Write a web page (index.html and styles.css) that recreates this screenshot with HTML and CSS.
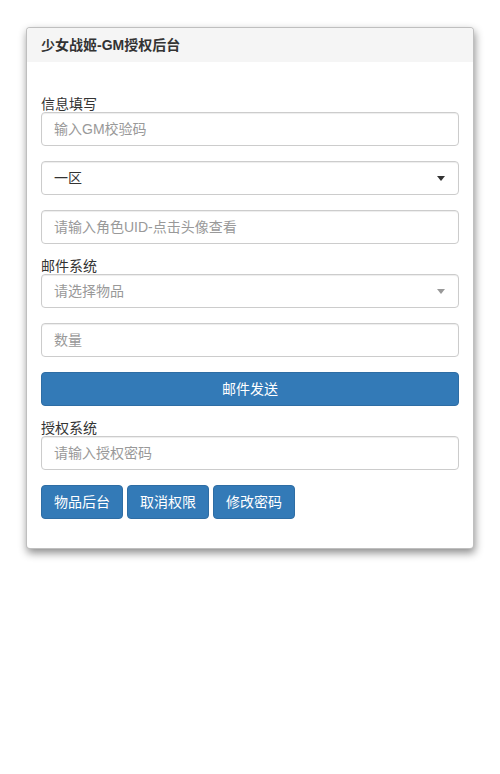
FILE: index.html
```html
<!DOCTYPE html>
<html lang="zh-CN">
<head>
<meta charset="utf-8">
<title>少女战姬-GM授权后台</title>
<link rel="stylesheet" href="styles.css">
</head>
<body>
<div class="panel">
  <div class="panel-heading">少女战姬-GM授权后台</div>
  <div class="panel-body">
    <label class="lbl">信息填写</label>
    <input class="form-control" type="text" placeholder="输入GM校验码">
    <div class="form-control select"><span>一区</span><span class="caret"></span></div>
    <input class="form-control" type="text" placeholder="请输入角色UID-点击头像查看">
    <label class="lbl">邮件系统</label>
    <div class="form-control select placeholder"><span>请选择物品</span><span class="caret light"></span></div>
    <input class="form-control" type="text" placeholder="数量">
    <button class="btn btn-block">邮件发送</button>
    <label class="lbl">授权系统</label>
    <input class="form-control" type="password" placeholder="请输入授权密码">
    <div class="btn-row">
      <button class="btn">物品后台</button>
      <button class="btn">取消权限</button>
      <button class="btn">修改密码</button>
    </div>
  </div>
</div>
</body>
</html>
```
FILE: styles.css
```css
* { box-sizing: border-box; }
html, body { margin: 0; padding: 0; background: #fff; }
body {
  padding: 27px 26px;
  font-family: "Liberation Sans", "Noto Sans CJK SC", sans-serif;
  font-size: 14px;
  color: #333;
}
.panel {
  width: 448px;
  border: 1px solid rgba(0,0,0,0.25);
  border-radius: 4px;
  background: #fff;
  box-shadow: 1px 4px 8px rgba(0,0,0,0.45);
  overflow: hidden;
}
.panel-heading {
  height: 34px;
  background: #f5f5f5;
  padding: 0 14px;
  font-weight: bold;
  font-size: 14px;
  line-height: 34px;
  color: #333;
}
.panel-body {
  padding: 35px 14px 29px;
  display: flex;
  flex-direction: column;
}
.lbl {
  display: block;
  height: 15px;
  line-height: 15px;
  font-size: 14px;
  color: #333;
}
.form-control {
  display: block;
  width: 100%;
  height: 34px;
  margin: 0 0 15px;
  padding: 6px 12px;
  font-family: inherit;
  font-size: 14px;
  line-height: 20px;
  color: #555;
  background: #fff;
  border: 1px solid #ccc;
  border-radius: 4px;
  box-shadow: inset 0 1px 1px rgba(0,0,0,0.075);
}
.lbl + .form-control { margin-top: 0; }
.form-control::placeholder { color: #999; }
.select {
  display: flex;
  align-items: center;
  justify-content: space-between;
  color: #333;
}
.select.placeholder { color: #999; }
.caret {
  width: 0;
  height: 0;
  margin-right: 1px;
  border-top: 5px solid #333;
  border-left: 4px solid transparent;
  border-right: 4px solid transparent;
}
.caret.light { border-top-color: #999; }
.btn {
  display: inline-block;
  height: 34px;
  padding: 6px 12px;
  font-family: inherit;
  font-size: 14px;
  line-height: 20px;
  color: #fff;
  background: #337ab7;
  border: 1px solid #2e6da4;
  border-radius: 4px;
  cursor: pointer;
}
.btn-block {
  width: 100%;
  margin-bottom: 15px;
}
.btn-row {
  display: flex;
  gap: 4px;
}
.btn-row .btn { width: 82px; padding: 6px 0; }
```
